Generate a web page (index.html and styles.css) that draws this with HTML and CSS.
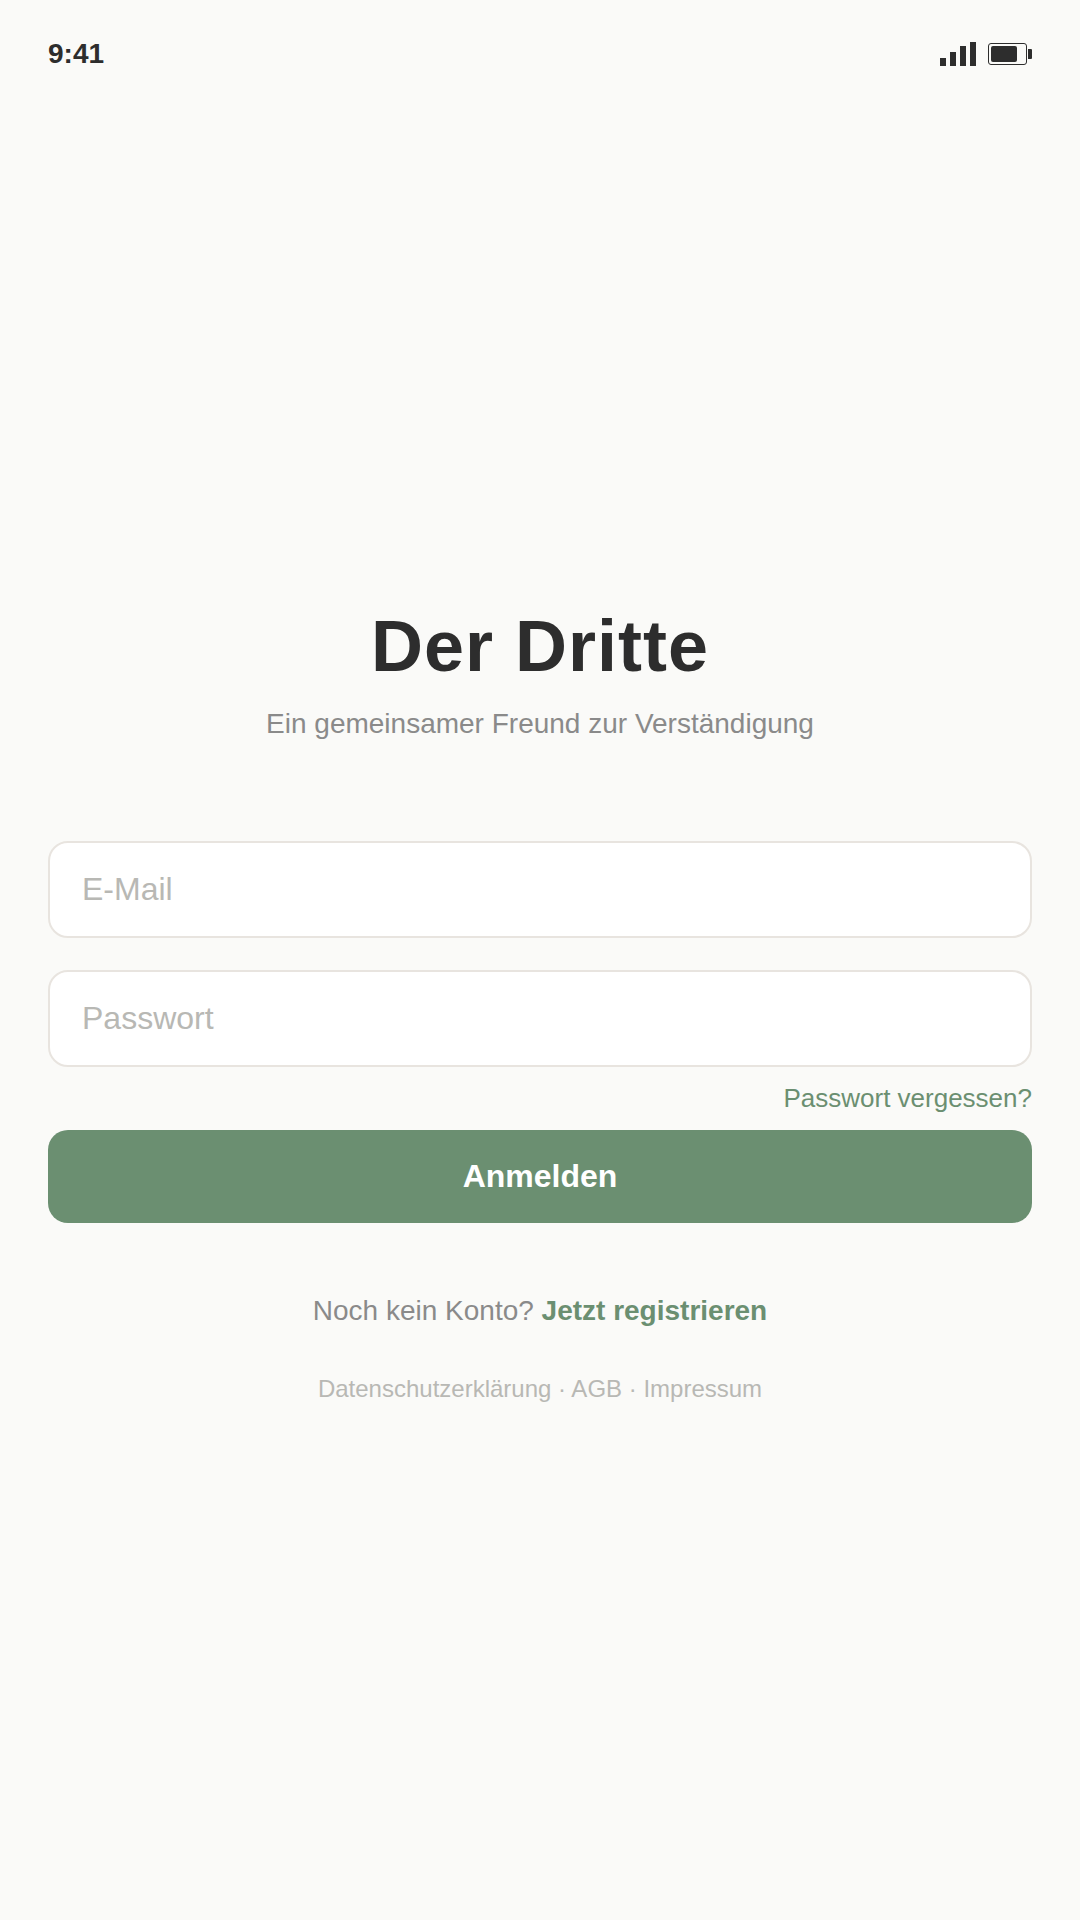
FILE: index.html
```html
<!DOCTYPE html>
<html lang="de">
<head>
  <meta charset="utf-8">
  <title>Der Dritte</title>
  <meta name="viewport" content="width=device-width, initial-scale=1">
  <link rel="stylesheet" href="styles.css">
</head>
<body>
  <div class="screen">
    <div class="status-bar">
      <span class="status-time">9:41</span>
      <div class="status-icons">
        <div class="signal">
          <span class="signal-bar signal-bar--1"></span>
          <span class="signal-bar signal-bar--2"></span>
          <span class="signal-bar signal-bar--3"></span>
          <span class="signal-bar signal-bar--4"></span>
        </div>
        <div class="battery">
          <div class="battery-body">
            <div class="battery-level"></div>
          </div>
          <div class="battery-tip"></div>
        </div>
      </div>
    </div>

    <main class="login">
      <h1 class="title">Der Dritte</h1>
      <p class="subtitle">Ein gemeinsamer Freund zur Verständigung</p>

      <form class="login-form">
        <input class="field" type="email" placeholder="E-Mail">
        <input class="field" type="password" placeholder="Passwort">
        <a class="forgot">Passwort vergessen?</a>
        <button class="submit" type="button">Anmelden</button>
      </form>

      <p class="register">Noch kein Konto? <a class="register-link">Jetzt registrieren</a></p>
      <p class="legal">Datenschutzerklärung · AGB · Impressum</p>
    </main>
  </div>
</body>
</html>
```

FILE: styles.css
```css
* {
  box-sizing: border-box;
}

body {
  margin: 0;
  background-color: #fafaf8;
  font-family: "Liberation Sans", Arial, sans-serif;
}

.screen {
  width: 1080px;
  height: 1920px;
  padding: 0 48px;
  overflow: hidden;
}

/* status bar */

.status-bar {
  display: flex;
  justify-content: space-between;
  align-items: center;
  height: 108px;
}

.status-time {
  font-size: 28px;
  font-weight: 700;
  color: #2d2d2d;
}

.status-icons {
  display: flex;
  align-items: center;
  gap: 12px;
}

.signal {
  display: flex;
  align-items: flex-end;
  gap: 4px;
  height: 24px;
}

.signal-bar {
  width: 6px;
  background-color: #2d2d2d;
}

.signal-bar--1 { height: 8px; }
.signal-bar--2 { height: 14px; }
.signal-bar--3 { height: 20px; }
.signal-bar--4 { height: 24px; }

.battery {
  display: flex;
  align-items: center;
  gap: 1px;
}

.battery-body {
  width: 39px;
  height: 22px;
  padding: 1.5px;
  border: 1.5px solid #2d2d2d;
  border-radius: 3px;
}

.battery-level {
  width: 26px;
  height: 16px;
  border-radius: 2px;
  background-color: #2d2d2d;
}

.battery-tip {
  width: 4px;
  height: 10px;
  border-radius: 0 1px 1px 0;
  background-color: #2d2d2d;
}

/* login */

.login {
  display: flex;
  flex-direction: column;
  align-items: center;
  padding-top: 497px;
}

.title {
  margin: 0;
  font-size: 72px;
  line-height: 83px;
  font-weight: 700;
  letter-spacing: 1px;
  color: #2d2d2d;
}

.subtitle {
  margin: 20px 0 0;
  font-size: 28px;
  line-height: 32px;
  color: #8a8a8a;
}

.login-form {
  display: flex;
  flex-direction: column;
  width: 100%;
  margin-top: 101px;
}

.field {
  width: 100%;
  height: 97px;
  margin-bottom: 32px;
  padding: 0 32px;
  border: 2px solid #e8e4df;
  border-radius: 20px;
  background-color: #fff;
  font-family: inherit;
  font-size: 32px;
  color: #2d2d2d;
}

.field::placeholder {
  color: #b8b8b4;
  opacity: 1;
}

.field + .field {
  margin-bottom: 0;
}

.forgot {
  align-self: flex-end;
  margin-top: 15px;
  font-size: 26px;
  line-height: 32px;
  color: #6b8f71;
}

.submit {
  height: 93px;
  margin-top: 16px;
  border: 0;
  border-radius: 20px;
  background-color: #6b8f71;
  font-family: inherit;
  font-size: 32px;
  font-weight: 700;
  color: #fff;
}

.register {
  margin: 71px 0 0;
  font-size: 28px;
  line-height: 34px;
  color: #8a8a8a;
}

.register-link {
  font-weight: 700;
  color: #6b8f71;
}

.legal {
  margin: 46px 0 0;
  font-size: 24px;
  line-height: 30px;
  color: #b8b8b4;
}
```
